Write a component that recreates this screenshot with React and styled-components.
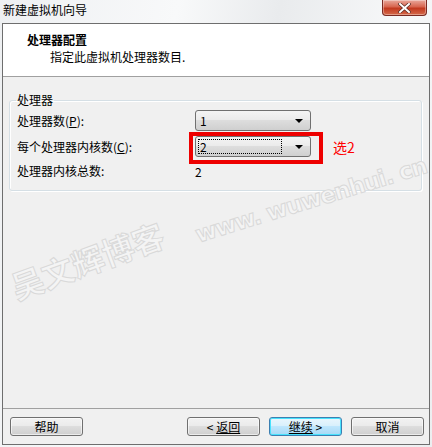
import React from 'react';
import styled, { createGlobalStyle } from 'styled-components';

const Global = createGlobalStyle`
  html, body { margin: 0; padding: 0; }
  body {
    width: 432px;
    height: 447px;
    overflow: hidden;
    background: #f6f7f8;
    font-family: "Noto Sans CJK SC", "Liberation Sans", sans-serif;
    font-size: 12px;
    color: #000;
  }
`;

const Window = styled.div`
  position: relative;
  width: 432px;
  height: 447px;
  display: flex;
  flex-direction: column;
  background: linear-gradient(100deg, #eef0f2 0%, #f8f9fa 35%, #e9ebed 55%, #f7f8f9 80%, #eceef0 100%);
  overflow: hidden;
`;

const TitleBar = styled.div`
  height: 23px;
  display: flex;
  align-items: flex-start;
  justify-content: space-between;
  padding-left: 3px;
`;

const TitleText = styled.span`
  line-height: 20px;
  font-size: 12px;
`;

const CloseButton = styled.div`
  width: 43px;
  height: 15px;
  margin-right: 5px;
  border: 1px solid #7a2a22;
  border-top: none;
  border-radius: 0 0 4px 4px;
  background: linear-gradient(#e9a99c 0%, #d7654f 45%, #c2391f 55%, #d56a4a 100%);
  display: flex;
  align-items: center;
  justify-content: center;
  box-shadow: inset 0 0 0 1px rgba(255, 255, 255, 0.35);
`;

const Frame = styled.div`
  flex: 1;
  margin: 0 2px 2px 2px;
  border: 1px solid #6e6e6e;
  display: flex;
  flex-direction: column;
  background: #f0f0f0;
`;

const Header = styled.div`
  height: 53px;
  background: #fff;
  border-bottom: 1px solid #a0a0a0;
  padding: 8px 0 0 24px;
  box-sizing: border-box;
`;

const HeaderTitle = styled.div`
  font-weight: bold;
  line-height: 16px;
`;

const HeaderSub = styled.div`
  padding-left: 23px;
  line-height: 18px;
`;

const Body = styled.div`
  flex: 1;
  padding: 16px 7px 0 6px;
`;

const Group = styled.fieldset`
  margin: 0;
  padding: 0 0 8px 7px;
  border: 1px solid #d5dfe5;
  border-radius: 3px;
  box-shadow: 1px 1px 0 #fff inset, 1px 1px 0 #fff;
`;

const Legend = styled.legend`
  padding: 0 1px;
  margin-left: -1px;
  line-height: 14px;
`;

const Row = styled.div`
  display: grid;
  grid-template-columns: 178px 128px 1fr;
  align-items: center;
  height: ${p => p.$h}px;
`;

const Label = styled.span`
  line-height: 16px;
`;

const Hot = styled.span`
  text-decoration: underline;
`;

const Highlight = styled.div`
  align-self: start;
  margin: -2px 0 -6px -6px;
  padding: 0 8px 3px 2px;
  border: 4px solid #ee0000;
  display: flex;
`;

const Combo = styled.div`
  width: 116px;
  height: 21px;
  box-sizing: border-box;
  border: 1px solid #707070;
  border-radius: 3px;
  background: linear-gradient(#f4f4f4 0%, #ebebeb 45%, #dddddd 50%, #cfcfcf 100%);
  display: flex;
  align-items: center;
  justify-content: space-between;
  padding: 0 7px 0 3px;
`;

const ComboValue = styled.span`
  line-height: 13px;
  padding: 0 1px;
  flex: ${p => (p.$focus ? 1 : 'none')};
  margin-right: ${p => (p.$focus ? '14px' : 0)};
  outline: ${p => (p.$focus ? '1px dotted #000' : 'none')};
`;

const Arrow = styled.span`
  width: 0;
  height: 0;
  border-left: 4px solid transparent;
  border-right: 4px solid transparent;
  border-top: 4px solid #000;
`;

const Note = styled.span`
  color: #ff0000;
  font-size: 14px;
  padding-left: 10px;
`;

const Footer = styled.div`
  height: 36px;
  border-top: 1px solid #a0a0a0;
  display: flex;
  align-items: flex-start;
  padding: 8px 0 0 7px;
  box-sizing: border-box;
  gap: 9px;
`;

const Button = styled.div`
  width: 73px;
  height: 19px;
  box-sizing: border-box;
  border: 1px solid ${p => (p.$def ? '#3c7fb1' : '#707070')};
  border-radius: 3px;
  background: ${p =>
    p.$def
      ? 'linear-gradient(#eaf6fd 0%, #d9f0fc 45%, #bee6fd 50%, #a7d9f5 100%)'
      : 'linear-gradient(#f2f2f2 0%, #ebebeb 45%, #dddddd 50%, #cfcfcf 100%)'};
  box-shadow: inset 0 0 0 1px ${p => (p.$def ? '#48e2fd' : 'rgba(255,255,255,0.6)')};
  display: flex;
  align-items: center;
  justify-content: center;
  line-height: 14px;
  margin-left: ${p => p.$push || 0}px;
`;

const Watermark = styled.div`
  position: absolute;
  left: ${p => p.$x}px;
  top: ${p => p.$y}px;
  transform: rotate(${p => p.$deg}deg);
  transform-origin: left center;
  font-size: ${p => p.$size}px;
  font-family: ${p => p.$font};
  font-weight: bold;
  color: #f4f4f4;
  letter-spacing: ${p => p.$ls || 0}px;
  -webkit-text-stroke: 1px #d9d9d9;
  white-space: nowrap;
  pointer-events: none;
`;

export default function App() {
  return (
    <Window>
      <Global />
      <TitleBar>
        <TitleText>新建虚拟机向导</TitleText>
        <CloseButton>
          <svg width="13" height="10" viewBox="0 0 13 10">
            <path d="M2 1 L11 9 M11 1 L2 9" stroke="#5b2b24" strokeWidth="3.4" strokeLinecap="square" />
            <path d="M2 1 L11 9 M11 1 L2 9" stroke="#fff" strokeWidth="2" strokeLinecap="square" />
          </svg>
        </CloseButton>
      </TitleBar>
      <Frame>
        <Header>
          <HeaderTitle>处理器配置</HeaderTitle>
          <HeaderSub>指定此虚拟机处理器数目.</HeaderSub>
        </Header>
        <Body>
          <Group>
            <Legend>处理器</Legend>
            <Row $h={27}>
              <Label>处理器数(<Hot>P</Hot>):</Label>
              <Combo>
                <ComboValue>1</ComboValue>
                <Arrow />
              </Combo>
            </Row>
            <Row $h={26}>
              <Label>每个处理器内核数(<Hot>C</Hot>):</Label>
              <Highlight>
                <Combo>
                  <ComboValue $focus>2</ComboValue>
                  <Arrow />
                </Combo>
              </Highlight>
              <Note>选2</Note>
            </Row>
            <Row $h={22}>
              <Label>处理器内核总数:</Label>
              <span>2</span>
            </Row>
          </Group>
        </Body>
        <Footer>
          <Button>帮助</Button>
          <Button $push={95}>&lt;&nbsp;<Hot>返回</Hot></Button>
          <Button $def><Hot>继续</Hot>&nbsp;&gt;</Button>
          <Button>取消</Button>
        </Footer>
      </Frame>
      <Watermark $x={12} $y={264} $deg={-20} $size={32} $font={'"Noto Sans CJK SC", sans-serif'}>吴文辉博客</Watermark>
      <Watermark $x={196} $y={222} $deg={-17} $size={23} $font={'"DejaVu Sans", sans-serif'} $ls={-1}>www. wuwenhui. cn</Watermark>
    </Window>
  );
}
